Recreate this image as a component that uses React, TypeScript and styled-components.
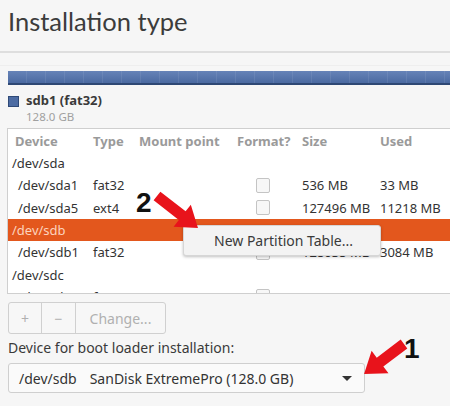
import styled, { createGlobalStyle } from "styled-components";

const GlobalStyle = createGlobalStyle`
  body {
    margin: 0;
    background: #f6f6f6;
    overflow: hidden;
    font-family: "Noto Sans", "Open Sans", sans-serif;
    color: #333;
  }
`;

const Page = styled.div`
  position: relative;
  width: 450px;
  height: 406px;
  overflow: hidden;
`;

const Title = styled.h1`
  margin: 0;
  padding: 4px 0 0 8px;
  height: 34px;
  font-family: Lato, "Noto Sans", sans-serif;
  font-size: 25.5px;
  line-height: 34px;
  font-weight: 400;
  color: #3c3c3c;
`;

const Rule = styled.div`
  margin-top: 13px;
  height: 2px;
  background: #dedede;
`;

const FaintRule = styled.div`
  margin-top: 12px;
  height: 1px;
  background: #eeeeee;
`;

const Bar = styled.div`
  margin: 5px 0 0 8px;
  width: 460px;
  height: 12px;
  border-bottom: 2px solid #2e4874;
  background: repeating-linear-gradient(
      90deg,
      transparent 0 18px,
      rgba(255, 255, 255, 0.08) 18px 19px
    ),
    linear-gradient(#6683b8, #4b6aa1);
`;

const Legend = styled.div`
  display: flex;
  align-items: flex-start;
  gap: 7px;
  margin: 7px 0 0 8px;
`;

const Swatch = styled.span`
  margin-top: 4px;
  width: 9px;
  height: 9px;
  background: #4d6ca3;
  border: 1px solid #2f4a78;
`;

const LegendText = styled.div`
  display: flex;
  flex-direction: column;
`;

const LegendName = styled.span`
  font-size: 13px;
  font-weight: 700;
  line-height: 17px;
  color: #3a3a3a;
`;

const LegendSize = styled.span`
  font-size: 11.5px;
  line-height: 15px;
  color: #a0a0a0;
`;

const TableBox = styled.div`
  margin: 4px 0 0 7px;
  width: 460px;
  height: 164px;
  background: #fff;
  border: 1px solid #cfcfcf;
  overflow: hidden;
`;

const Row = styled.div<{ $header?: boolean; $selected?: boolean }>`
  display: grid;
  grid-template-columns: 85px 46px 98px 65px 78px 1fr;
  align-items: center;
  height: ${({ $header }) => ($header ? "23px" : "22.3px")};
  font-size: 13px;
  white-space: nowrap;
  color: ${({ $header, $selected }) =>
    $header ? "#9a9a9a" : $selected ? "#fcd3bd" : "#333"};
  font-weight: ${({ $header }) => ($header ? 700 : 400)};
  background: ${({ $selected }) => ($selected ? "#e3571d" : "transparent")};
`;

const DevCell = styled.span<{ $indent: number }>`
  padding-left: ${({ $indent }) => $indent}px;
`;

const CheckCell = styled.span`
  display: flex;
  justify-content: center;
  padding-right: 13px;
`;

const Check = styled.span`
  width: 12px;
  height: 13px;
  border: 1px solid #c4c4c4;
  border-radius: 2px;
  background: #f7f7f7;
`;

const Buttons = styled.div`
  display: flex;
  margin: 8px 0 0 8px;
  width: max-content;
  height: 30px;
  border: 1px solid #d0d0d0;
  border-radius: 3px;
  background: #f7f7f7;
`;

const SegButton = styled.button<{ $w: number }>`
  width: ${({ $w }) => $w}px;
  border: none;
  border-right: 1px solid #d0d0d0;
  background: transparent;
  color: #b0b0b0;
  font-family: inherit;
  font-size: 14px;
  padding: 0;
  &:last-child {
    border-right: none;
  }
`;

const Label = styled.div`
  margin: 4px 0 0 8px;
  font-size: 14px;
  line-height: 20px;
  color: #3a3a3a;
`;

const Combo = styled.div`
  display: flex;
  align-items: center;
  margin: 5px 0 0 8px;
  width: 357px;
  height: 30px;
  padding-left: 10px;
  box-sizing: border-box;
  border: 1px solid #cfcfcf;
  border-radius: 3px;
  background: #fafafa;
  font-size: 14px;
  color: #333;
  gap: 13px;
`;

const Caret = styled.span`
  margin-left: auto;
  margin-right: 12px;
  width: 0;
  height: 0;
  border-left: 5px solid transparent;
  border-right: 5px solid transparent;
  border-top: 5px solid #333;
`;

const Menu = styled.div`
  position: absolute;
  left: 183px;
  top: 225px;
  width: 198px;
  height: 31px;
  display: flex;
  align-items: center;
  padding-left: 30px;
  box-sizing: border-box;
  background: #f3f3f3;
  border: 1px solid #d6d6d6;
  border-radius: 3px;
  box-shadow: 0 1px 3px rgba(0, 0, 0, 0.25);
  font-size: 14px;
  color: #3a3a3a;
`;

const Marker = styled.span<{ $x: number; $y: number }>`
  position: absolute;
  left: ${({ $x }) => $x}px;
  top: ${({ $y }) => $y}px;
  font-family: "Liberation Sans", Arial, sans-serif;
  font-weight: 700;
  font-size: 28px;
  line-height: 28px;
  color: #111;
`;

const Overlay = styled.svg`
  position: absolute;
  left: 0;
  top: 0;
  pointer-events: none;
`;

const arrowPoints = (len: number) =>
  `0,-5.5 ${len - 20},-5.5 ${len - 20},-14 ${len},0 ${len - 20},14 ${len - 20},5.5 0,5.5`;

type Part = { dev: string; type?: string; size?: string; used?: string; sub?: boolean; check?: boolean; selected?: boolean };

const rows: Part[] = [
  { dev: "/dev/sda" },
  { dev: "/dev/sda1", type: "fat32", size: "536 MB", used: "33 MB", sub: true, check: true },
  { dev: "/dev/sda5", type: "ext4", size: "127496 MB", used: "11218 MB", sub: true, check: true },
  { dev: "/dev/sdb", selected: true },
  { dev: "/dev/sdb1", type: "fat32", size: "128035 MB", used: "3084 MB", sub: true, check: true },
  { dev: "/dev/sdc" },
  { dev: "/dev/sdc1", type: "fat32", size: "32035 MB", used: "3068 MB", sub: true, check: true },
];

export default function App() {
  return (
    <Page>
      <GlobalStyle />
      <Title>Installation type</Title>
      <Rule />
      <FaintRule />
      <Bar />
      <Legend>
        <Swatch />
        <LegendText>
          <LegendName>sdb1 (fat32)</LegendName>
          <LegendSize>128.0 GB</LegendSize>
        </LegendText>
      </Legend>
      <TableBox>
        <Row $header>
          <DevCell $indent={7}>Device</DevCell>
          <span>Type</span>
          <span>Mount point</span>
          <span>Format?</span>
          <span>Size</span>
          <span>Used</span>
        </Row>
        {rows.map((r) => (
          <Row key={r.dev} $selected={r.selected}>
            <DevCell $indent={r.sub ? 10 : 4}>{r.dev}</DevCell>
            <span>{r.type}</span>
            <span />
            <CheckCell>{r.check && <Check />}</CheckCell>
            <span>{r.size}</span>
            <span>{r.used}</span>
          </Row>
        ))}
      </TableBox>
      <Buttons>
        <SegButton $w={33}>+</SegButton>
        <SegButton $w={34}>−</SegButton>
        <SegButton $w={89}>Change...</SegButton>
      </Buttons>
      <Label>Device for boot loader installation:</Label>
      <Combo>
        <span>/dev/sdb</span>
        <span>SanDisk ExtremePro (128.0 GB)</span>
        <Caret />
      </Combo>

      <Menu>New Partition Table...</Menu>

      <Marker $x={136} $y={189}>2</Marker>
      <Marker $x={404} $y={335}>1</Marker>
      <Overlay width="450" height="406" viewBox="0 0 450 406">
        <polygon
          points={arrowPoints(52)}
          fill="#e8131b"
          transform="translate(157 196) rotate(38)"
        />
        <polygon
          points={arrowPoints(50)}
          fill="#e8131b"
          transform="translate(404 344) rotate(143)"
        />
      </Overlay>
    </Page>
  );
}
